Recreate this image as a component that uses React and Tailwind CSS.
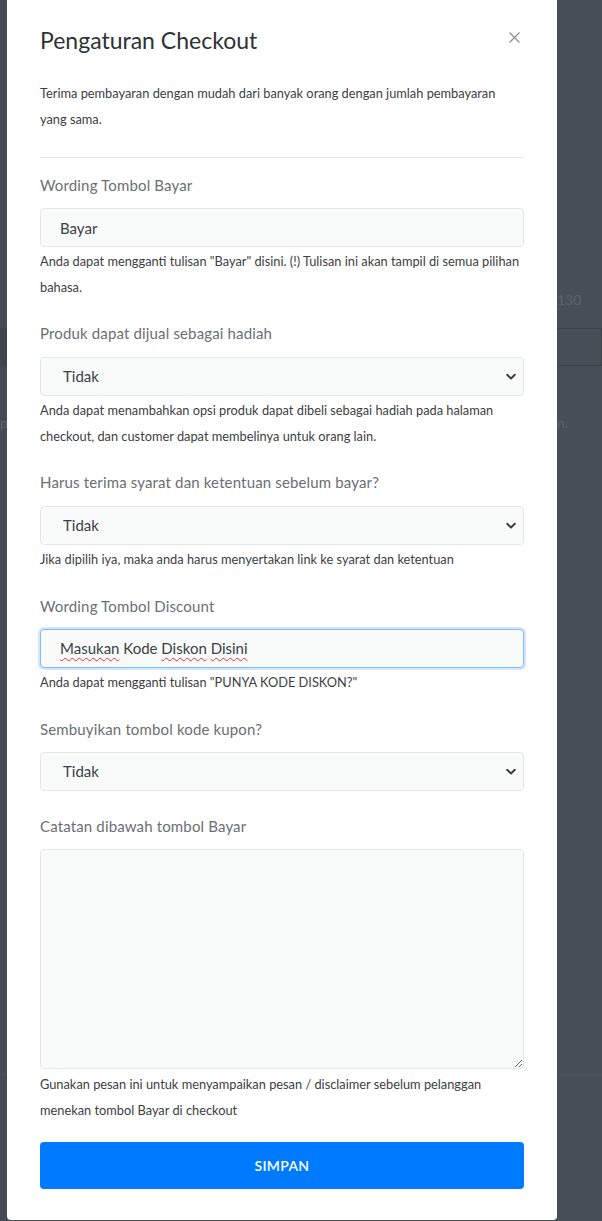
import React from "react";

function Chevron() {
  return (
    <svg width="10" height="7" viewBox="0 0 10 7" className="pointer-events-none absolute right-[8px] top-1/2 -translate-y-1/2">
      <path d="M1.2 1.3 L5 5 L8.8 1.3" fill="none" stroke="#3a3f45" strokeWidth="2" strokeLinecap="round" strokeLinejoin="round" />
    </svg>
  );
}

function Label({ children }) {
  return <div className="text-[15px] leading-[22px] text-[#6b6f74] tracking-[0.15px]">{children}</div>;
}

function Help({ children, className = "mt-[1px]" }) {
  return <div className={`${className} text-[12.8px] leading-[26px] text-[#3d4043]`}>{children}</div>;
}

function SelectBox({ className = "mt-[13px]" }) {
  return (
    <div className={`relative ${className}`}>
      <select
        defaultValue="Tidak"
        className="h-[39px] w-full appearance-none rounded-[4px] border border-[#e3e7ea] bg-[#f9fafa] pl-[22px] text-[15px] text-[#3c4046] outline-none"
      >
        <option>Tidak</option>
        <option>Ya</option>
      </select>
      <Chevron />
    </div>
  );
}

export default function App() {
  return (
    <div className="flex h-[1221px] w-full overflow-hidden bg-[#474e57] font-[Lato,'Noto_Sans',sans-serif]">
      {/* left strip of dimmed page */}
      <div className="flex w-[7px] shrink-0 flex-col bg-[#454b54]">
        <div className="mt-[328px] h-[38px] bg-[#3f454d]" />
        <div className="mt-[48px] text-[14px] leading-[18px] text-[#5d636b]">pa</div>
        <div className="mt-[642px] h-px bg-[#4d545d]" />
      </div>

      {/* modal */}
      <div className="flex h-[1220px] w-[550px] shrink-0 flex-col rounded-b-[4px] bg-white px-[33px] pt-[25px]">
        <div className="flex items-start justify-between">
          <h2 className="text-[23px] leading-[30px] text-[#2f3235]">Pengaturan Checkout</h2>
          <svg width="11" height="11" viewBox="0 0 11 11" className="mr-[4px] mt-[7px]">
            <path d="M0.5 0.5 L10.5 10.5 M10.5 0.5 L0.5 10.5" stroke="#8d8f92" strokeWidth="1.2" />
          </svg>
        </div>

        <p className="mt-[25px] text-[12.8px] leading-[26px] text-[#3d4043]">
          Terima pembayaran dengan mudah dari banyak orang dengan jumlah pembayaran yang sama.
        </p>

        <div className="mt-[25px] h-px bg-[#e4e6e8]" />

        <div className="mt-[16px]">
          <Label>Wording Tombol Bayar</Label>
          <input
            defaultValue="Bayar"
            className="mt-[12px] h-[39px] w-full rounded-[4px] border border-[#e3e7ea] bg-[#f9fafa] px-[19px] text-[15px] text-[#3c4046] outline-none"
          />
          <Help>
            Anda dapat mengganti tulisan "Bayar" disini. (!) Tulisan ini akan tampil di semua pilihan bahasa.
          </Help>
        </div>

        <div className="mt-[22px]">
          <Label>Produk dapat dijual sebagai hadiah</Label>
          <SelectBox />
          <Help>
            Anda dapat menambahkan opsi produk dapat dibeli sebagai hadiah pada halaman checkout, dan customer dapat membelinya untuk orang lain.
          </Help>
        </div>

        <div className="mt-[22px]">
          <Label>Harus terima syarat dan ketentuan sebelum bayar?</Label>
          <SelectBox />
          <Help>Jika dipilih iya, maka anda harus menyertakan link ke syarat dan ketentuan</Help>
        </div>

        <div className="mt-[23px]">
          <Label>Wording Tombol Discount</Label>
          <div className="mt-[12px] flex h-[39px] w-full items-center rounded-[4px] border border-[#80bdff] bg-[#f9fafa] px-[19px] text-[15px] text-[#3c4046] shadow-[0_0_0_2px_rgba(0,123,255,0.18)]">
            <span>
              <span className="underline decoration-[#e0322f] decoration-wavy decoration-1 underline-offset-[3px]">Masukan</span>{" "}
              Kode{" "}
              <span className="underline decoration-[#e0322f] decoration-wavy decoration-1 underline-offset-[3px]">Diskon</span>{" "}
              <span className="underline decoration-[#e0322f] decoration-wavy decoration-1 underline-offset-[3px]">Disini</span>
            </span>
          </div>
          <Help>Anda dapat mengganti tulisan "PUNYA KODE DISKON?"</Help>
        </div>

        <div className="mt-[23px]">
          <Label>Sembuyikan tombol kode kupon?</Label>
          <SelectBox className="mt-[12px]" />
        </div>

        <div className="mt-[24px]">
          <Label>Catatan dibawah tombol Bayar</Label>
          <textarea className="mt-[12px] block h-[220px] w-full rounded-[4px] border border-[#e3e7ea] bg-[#f9fafa] outline-none" />
          <Help className="mt-[2px]">
            Gunakan pesan ini untuk menyampaikan pesan / disclaimer sebelum pelanggan menekan tombol Bayar di checkout
          </Help>
        </div>

        <button className="mt-[19px] h-[47px] w-full rounded-[4px] bg-[#007bff] text-[14px] font-semibold tracking-[0.3px] text-white">
          SIMPAN
        </button>
      </div>

      {/* right strip of dimmed page */}
      <div className="flex flex-1 flex-col">
        <div className="mt-[291px] text-[14px] leading-[18px] text-[#5d636b]">130</div>
        <div className="mt-[19px] h-[38px] border border-l-0 border-[#3b4048]" />
        <div className="mt-[48px] text-[14px] leading-[18px] text-[#5d636b]">n.</div>
        <div className="mt-[642px] h-px bg-[#4d545d]" />
      </div>
    </div>
  );
}
